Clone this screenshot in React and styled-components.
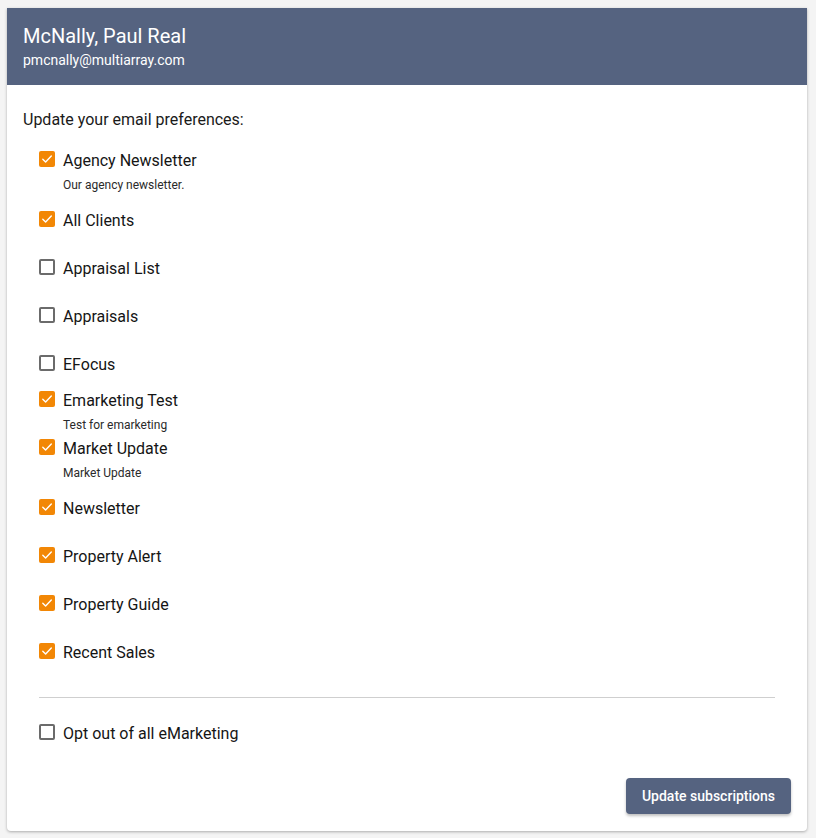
import React, { useState } from "react";
import styled, { createGlobalStyle } from "styled-components";

const GlobalStyle = createGlobalStyle`
  html, body {
    margin: 0;
    padding: 0;
    background: #f4f4f4;
    font-family: Roboto, "Liberation Sans", Arial, sans-serif;
  }
`;

const Page = styled.div`
  padding: 8px 9px 8px 7px;
`;

const Card = styled.div`
  width: 800px;
  background: #fff;
  border-radius: 0 0 4px 4px;
  box-shadow: 0 1px 3px rgba(0, 0, 0, 0.3);
`;

const Header = styled.header`
  background: #556380;
  color: #fff;
  padding: 14px 16px 15px;
`;

const Name = styled.h1`
  margin: 0;
  font-size: 20px;
  font-weight: 400;
  line-height: 28px;
`;

const Email = styled.div`
  font-size: 14px;
  line-height: 20px;
`;

const Body = styled.div`
  padding: 23px 16px 17px;
`;

const Heading = styled.h2`
  margin: 0 0 17px;
  font-size: 16px;
  font-weight: 400;
  line-height: 24px;
  color: #1a1a1a;
`;

const List = styled.div`
  display: flex;
  flex-direction: column;
  padding-left: 16px;
`;

const Item = styled.div`
  display: flex;
  flex-direction: column;
  padding: ${(p) => (p.$hasDesc ? "0" : "12px 0")};
`;

const Row = styled.label`
  display: flex;
  align-items: center;
  gap: 8px;
  cursor: pointer;
  font-size: 16px;
  line-height: 24px;
  color: #151515;
`;

const Box = styled.span`
  width: 16px;
  height: 16px;
  box-sizing: border-box;
  border-radius: 2px;
  margin-top: -4px;
  display: flex;
  align-items: center;
  justify-content: center;
  background: ${(p) => (p.$checked ? "#f28705" : "#fff")};
  border: ${(p) => (p.$checked ? "none" : "2px solid #6b6b6b")};
  flex-shrink: 0;
`;

const Desc = styled.div`
  padding-left: 24px;
  font-size: 12px;
  line-height: 24px;
  color: #2a2a2a;
`;

const Divider = styled.hr`
  border: 0;
  border-top: 1px solid #cfcfcf;
  margin: 20px 16px 12px 16px;
`;

const Footer = styled.div`
  display: flex;
  justify-content: flex-end;
  margin-top: 20px;
`;

const Button = styled.button`
  background: #556380;
  color: #fff;
  border: 0;
  border-radius: 4px;
  height: 36px;
  padding: 0 16px;
  font-family: inherit;
  font-size: 14px;
  font-weight: 500;
  box-shadow: 0 2px 3px rgba(0, 0, 0, 0.25);
  cursor: pointer;
`;

const Check = () => (
  <svg width="12" height="12" viewBox="0 0 12 12" fill="none">
    <path d="M1.8 6.2 L4.6 9 L10.3 3" stroke="#fff" strokeWidth="1.4" strokeLinecap="round" strokeLinejoin="round" />
  </svg>
);

const initial = [
  { name: "Agency Newsletter", desc: "Our agency newsletter.", on: true },
  { name: "All Clients", on: true },
  { name: "Appraisal List", on: false },
  { name: "Appraisals", on: false },
  { name: "EFocus", on: false },
  { name: "Emarketing Test", desc: "Test for emarketing", on: true },
  { name: "Market Update", desc: "Market Update", on: true },
  { name: "Newsletter", on: true },
  { name: "Property Alert", on: true },
  { name: "Property Guide", on: true },
  { name: "Recent Sales", on: true },
];

const Option = ({ name, desc, checked, onToggle }) => (
  <Item $hasDesc={!!desc}>
    <Row onClick={onToggle}>
      <Box $checked={checked}>{checked && <Check />}</Box>
      {name}
    </Row>
    {desc && <Desc>{desc}</Desc>}
  </Item>
);

export default function App() {
  const [lists, setLists] = useState(initial);
  const [optOut, setOptOut] = useState(false);

  const toggle = (i) =>
    setLists((prev) => prev.map((l, j) => (j === i ? { ...l, on: !l.on } : l)));

  return (
    <Page>
      <GlobalStyle />
      <Card>
        <Header>
          <Name>McNally, Paul Real</Name>
          <Email>pmcnally@multiarray.com</Email>
        </Header>
        <Body>
          <Heading>Update your email preferences:</Heading>
          <List>
            {lists.map((l, i) => (
              <Option key={l.name} name={l.name} desc={l.desc} checked={l.on} onToggle={() => toggle(i)} />
            ))}
          </List>
          <Divider />
          <List>
            <Option name="Opt out of all eMarketing" checked={optOut} onToggle={() => setOptOut(!optOut)} />
          </List>
          <Footer>
            <Button>Update subscriptions</Button>
          </Footer>
        </Body>
      </Card>
    </Page>
  );
}
